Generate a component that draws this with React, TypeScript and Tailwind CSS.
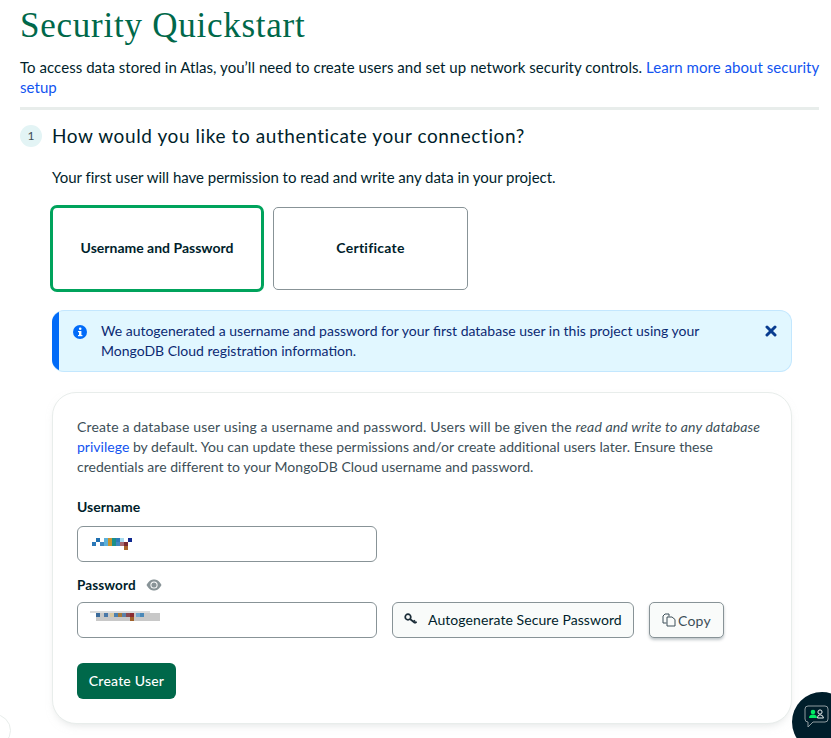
import React from "react";

const font = { fontFamily: "Lato" };

function Mosaic({ cells, w, h }: { cells: [number, number, number, number, string][]; w: number; h: number }) {
  return (
    <svg width={w} height={h} viewBox={`0 0 ${w} ${h}`} shapeRendering="crispEdges" className="block">
      {cells.map((c, i) => (
        <rect key={i} x={c[0]} y={c[1]} width={c[2]} height={c[3]} fill={c[4]} />
      ))}
    </svg>
  );
}

const userCells: [number, number, number, number, string][] = [
  [0, 4, 4, 4, "#2a78b8"], [4, 0, 4, 4, "#1f6fb0"], [8, 4, 4, 4, "#3f87c0"], [12, 0, 4, 8, "#5cb0d8"],
  [16, 0, 4, 8, "#c8962e"], [20, 0, 4, 8, "#1a8f8a"], [24, 0, 4, 4, "#2d7ab8"], [24, 4, 4, 4, "#3f87c0"],
  [28, 0, 4, 4, "#a8dcf0"], [28, 4, 4, 4, "#a86a70"], [32, 4, 4, 4, "#7a2a30"], [36, 0, 4, 4, "#102a90"],
  [32, 8, 4, 4, "#a8662a"],
];
const passCells: [number, number, number, number, string][] = [
  [0, 0, 60, 2, "#dcdcdc"], [6, 2, 64, 8, "#c8c8c8"],
  [6, 2, 4, 4, "#3a6a9a"], [14, 2, 4, 4, "#4a78a8"], [20, 2, 4, 4, "#d8c8a0"], [24, 2, 4, 4, "#4a80b0"],
  [28, 2, 4, 4, "#a87a38"], [32, 2, 4, 4, "#5a80a8"], [36, 2, 4, 4, "#8a4a50"], [40, 2, 4, 4, "#8a2a30"],
  [40, 6, 4, 4, "#a0602a"], [46, 2, 4, 4, "#70a8d0"], [50, 2, 4, 4, "#4a88b8"],
];

export default function App() {
  return (
    <div style={font} className="relative h-[738px] w-[831px] overflow-hidden bg-white text-[#001e2b]">
      <div className="pl-5 pr-2 pt-[6px]">
        <h1 style={{ fontFamily: "Liberation Serif" }} className="text-[35px] leading-10 text-[#00684a] tracking-[0.75px]">
          Security Quickstart
        </h1>
        <p className="mt-[11px] text-[15px] leading-5 tracking-[0.05px]">
          To access data stored in Atlas, you’ll need to create users and set up network security controls.{" "}
          <span className="text-[#1254f0] tracking-[0.05px]">Learn more about security setup</span>
        </p>
        <div className="mt-[10px] h-[3px] w-[799px] bg-[#e8edeb]" />
        <div className="mt-[15px] flex items-center gap-[10px]">
          <div className="flex h-[22px] w-[22px] items-center justify-center rounded-full bg-[#e3f4f5] text-[12px] text-[#3d4f58]">1</div>
          <h2 className="text-[19px] leading-[22px] tracking-[0.59px]">How would you like to authenticate your connection?</h2>
        </div>
        <div className="ml-8">
          <p className="mt-[20px] text-[15px] leading-5 tracking-[-0.02px]">
            Your first user will have permission to read and write any data in your project.
          </p>
          <div className="mt-[18px] ml-[-2px] flex items-center gap-[9px]">
            <div className="flex h-[87px] w-[214px] items-center justify-center rounded-[7px] border-[3px] border-[#00a35c] pb-[2px] text-[14px] font-bold">
              Username and Password
            </div>
            <div className="flex h-[83px] w-[195px] items-center justify-center rounded-[5px] border border-[#889397] pb-[2px] text-[14px] font-bold tracking-[0.25px]">
              Certificate
            </div>
          </div>
          <div className="mt-[18px] flex h-[62px] w-[740px] overflow-hidden rounded-xl border border-[#c3e7fe] border-l-0 bg-[#e1f7ff]">
            <div className="w-[7px] shrink-0 bg-[#016bf8]" />
            <svg width="16" height="16" viewBox="0 0 16 16" className="ml-[13px] mt-[13px] shrink-0">
              <circle cx="8" cy="8" r="7" fill="#016bf8" />
              <rect x="7" y="7" width="2.4" height="5" fill="#fff" />
              <rect x="6" y="7" width="2" height="1.2" fill="#fff" />
              <rect x="6" y="11" width="4.4" height="1.2" fill="#fff" />
              <circle cx="8.2" cy="4.8" r="1.3" fill="#fff" />
            </svg>
            <p className="ml-[13px] mt-[10px] w-[640px] text-[14px] leading-5 text-[#0c2a73]">
              We autogenerated a username and password for your first database user in this project using your MongoDB Cloud registration information.
            </p>
            <svg width="12" height="12" viewBox="0 0 12 12" className="ml-auto mr-[14px] mt-[14px] shrink-0">
              <path d="M2 2 L10 10 M10 2 L2 10" stroke="#083c90" strokeWidth="3" strokeLinecap="round" />
            </svg>
          </div>
          <div className="mt-5 h-[332px] w-[740px] rounded-[24px] border border-[#e8edeb] bg-white px-6 pt-[24px] shadow-[0_4px_10px_-4px_rgba(193,199,198,0.6)]">
            <p className="w-[690px] text-[14px] leading-5 text-[#3d4f58]">
              <span className="tracking-[0.16px]">
                Create a database user using a username and password. Users will be given the <em>read and write to any database</em>
              </span>{" "}
              <span className="tracking-[0.02px]">
                <span className="text-[#1254f0]">privilege</span> by default. You can update these permissions and/or create additional users later. Ensure these credentials are different to your MongoDB Cloud username and password.
              </span>
            </p>
            <div className="mt-[20px] text-[14px] font-bold leading-5">Username</div>
            <div className="mt-[9px] flex h-9 w-[300px] items-center rounded-[6px] border border-[#889397] pl-[14px]">
              <Mosaic cells={userCells} w={40} h={12} />
            </div>
            <div className="mt-[13px] flex h-5 items-center gap-[10px] text-[13.5px] font-bold tracking-[0.1px]">
              Password
              <svg width="16" height="12" viewBox="0 0 16 12">
                <path d="M0.5 6 C3 1.5 5.5 0.5 8 0.5 C10.5 0.5 13 1.5 15.5 6 C13 10.5 10.5 11.5 8 11.5 C5.5 11.5 3 10.5 0.5 6 Z" fill="#889397" />
                <circle cx="8" cy="6" r="3.6" fill="#fff" />
                <circle cx="8" cy="6" r="2.6" fill="#889397" />
              </svg>
            </div>
            <div className="mt-[7px] flex items-center">
              <div className="flex h-9 w-[300px] rounded-[6px] border border-[#889397] pl-[12px] pt-[8px]">
                <Mosaic cells={passCells} w={72} h={12} />
              </div>
              <div className="ml-[15px] flex h-9 w-[242px] items-center rounded-[6px] border border-[#889397] bg-[#f9fbfa] pb-[1px] pl-[11px] text-[14px] tracking-[0.08px]">
                <svg width="14" height="13" viewBox="0 0 14 13" className="mr-[10px]">
                  <circle cx="4" cy="4" r="2.8" fill="none" stroke="#1c2d38" strokeWidth="1.7" />
                  <path d="M6 6 L11 10 M9.4 8.8 L11 7.4 M11 10 L12.6 8.8" stroke="#1c2d38" strokeWidth="1.7" fill="none" />
                </svg>
                Autogenerate Secure Password
              </div>
              <div className="ml-[15px] flex h-9 w-[75px] items-center justify-center gap-[2px] rounded-[5px] border border-[#889397] bg-[#f9fbfa] text-[14px] tracking-[0.3px] text-[#3d4f58] shadow-[0_2px_3px_rgba(0,30,43,0.25)]">
                <svg width="14" height="14" viewBox="0 0 14 14" fill="none" stroke="#3d4f58" strokeWidth="1">
                  <path d="M4.5 10 H1 V3 L3 1 H7 V3.5" />
                  <path d="M5 4 H10 L13 6.5 V13 H5 Z" />
                </svg>
                Copy
              </div>
            </div>
            <div className="mt-[25px] flex h-9 w-[99px] items-center justify-center rounded-[6px] bg-[#00684a] pb-[1px] text-[14px] font-medium tracking-[0.2px] text-white">
              Create User
            </div>
          </div>
        </div>
      </div>

      <div className="absolute left-[-22px] top-[714px] h-[33px] w-[33px] rounded-full border border-[#e8edeb] bg-white" />

      <div className="absolute left-[792px] top-[692px] flex h-[60px] w-[60px] items-start justify-start rounded-full bg-[#001e2b]">
        <svg width="26" height="27" viewBox="0 0 26 27" className="ml-[12px] mt-[13px]" fill="none">
          <path d="M4 1 H21 Q24 1 24 4 V14 Q24 17 21 17 H9 L4 22 V17 Q1 17 1 14 V4 Q1 1 4 1 Z" stroke="#8f9ba0" strokeWidth="1" />
          <circle cx="9" cy="7" r="2.3" fill="#00ed64" />
          <path d="M5 13 Q5 9.5 9 9.5 Q13 9.5 13 13 Z" fill="#00ed64" />
          <circle cx="16" cy="7" r="2.1" stroke="#e8edeb" strokeWidth="1" />
          <path d="M13.5 13 Q13.5 9.8 16 9.8 Q19 9.8 19.5 13 Z" stroke="#e8edeb" strokeWidth="1" />
        </svg>
      </div>
    </div>
  );
}
